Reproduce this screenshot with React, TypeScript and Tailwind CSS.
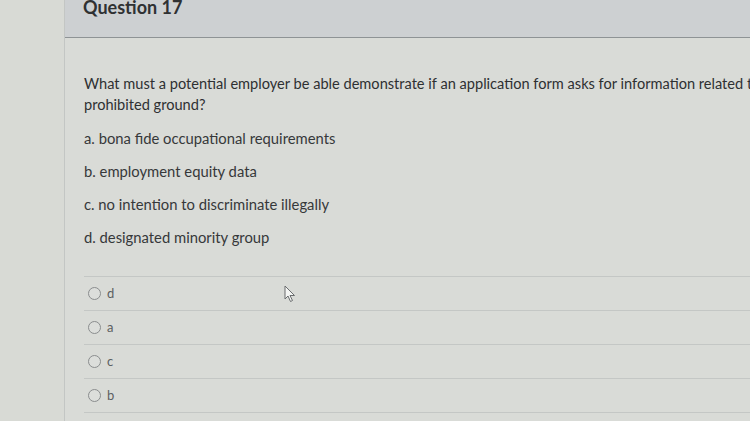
import { useState } from 'react';

const choices = [
  'a. bona fide occupational requirements',
  'b. employment equity data',
  'c. no intention to discriminate illegally',
  'd. designated minority group',
];

const answers = ['d', 'a', 'c', 'b'];

function App() {
  const [picked, setPicked] = useState<string | null>(null);

  return (
    <div className="w-[750px] h-[421px] overflow-hidden flex bg-[#d9dbd7] font-['Lato','Liberation_Sans',sans-serif] relative">
      <div className="w-[64px] shrink-0 bg-[#d8dad5]" />
      <div className="flex-1 border-l border-[#c3c6c4] flex flex-col">
        <div className="h-[38px] bg-[#cdd0d2] border-b border-[#8e9395] pl-[18px] overflow-hidden">
          <h2 className="text-[18px] font-bold text-[#2f3133] leading-[20px] -mt-[3px]">Question 17</h2>
        </div>
        <div className="pl-[19px] pt-[35px]">
          <p className="text-[14.6px] leading-[21px] text-[#2e3032] whitespace-nowrap">
            What must a potential employer be able demonstrate if an application form asks for information related to a
            <br />
            prohibited ground?
          </p>
          <div className="mt-[14px] flex flex-col gap-[14px]">
            {choices.map((c) => (
              <div key={c} className="text-[14.8px] leading-[19px] text-[#36383a]">
                {c}
              </div>
            ))}
          </div>
          <div className="mt-[29px] border-t border-[#c4c7c5]">
            {answers.map((a) => (
              <label
                key={a}
                className="h-[34px] flex items-center gap-[6px] pl-[4px] border-b border-[#c4c7c5] cursor-pointer"
              >
                <input
                  type="radio"
                  name="q17"
                  checked={picked === a}
                  onChange={() => setPicked(a)}
                  className="appearance-none w-[13px] h-[13px] rounded-full border border-[#8a8d8e] bg-[#dcdedb] checked:bg-[#5a5d5f]"
                />
                <span className="text-[13px] text-[#5c5f61]">{a}</span>
              </label>
            ))}
          </div>
        </div>
      </div>
      <svg className="absolute left-[284px] top-[285px]" width="12" height="18" viewBox="0 0 12 18">
        <path d="M1 1 L1 14 L4 11 L6.5 16.5 L8.5 15.5 L6 10.5 L10.5 10.5 Z" fill="#f4f5f3" stroke="#6a6d6f" strokeWidth="1" strokeLinejoin="round" />
      </svg>
    </div>
  );
}

export default App;
